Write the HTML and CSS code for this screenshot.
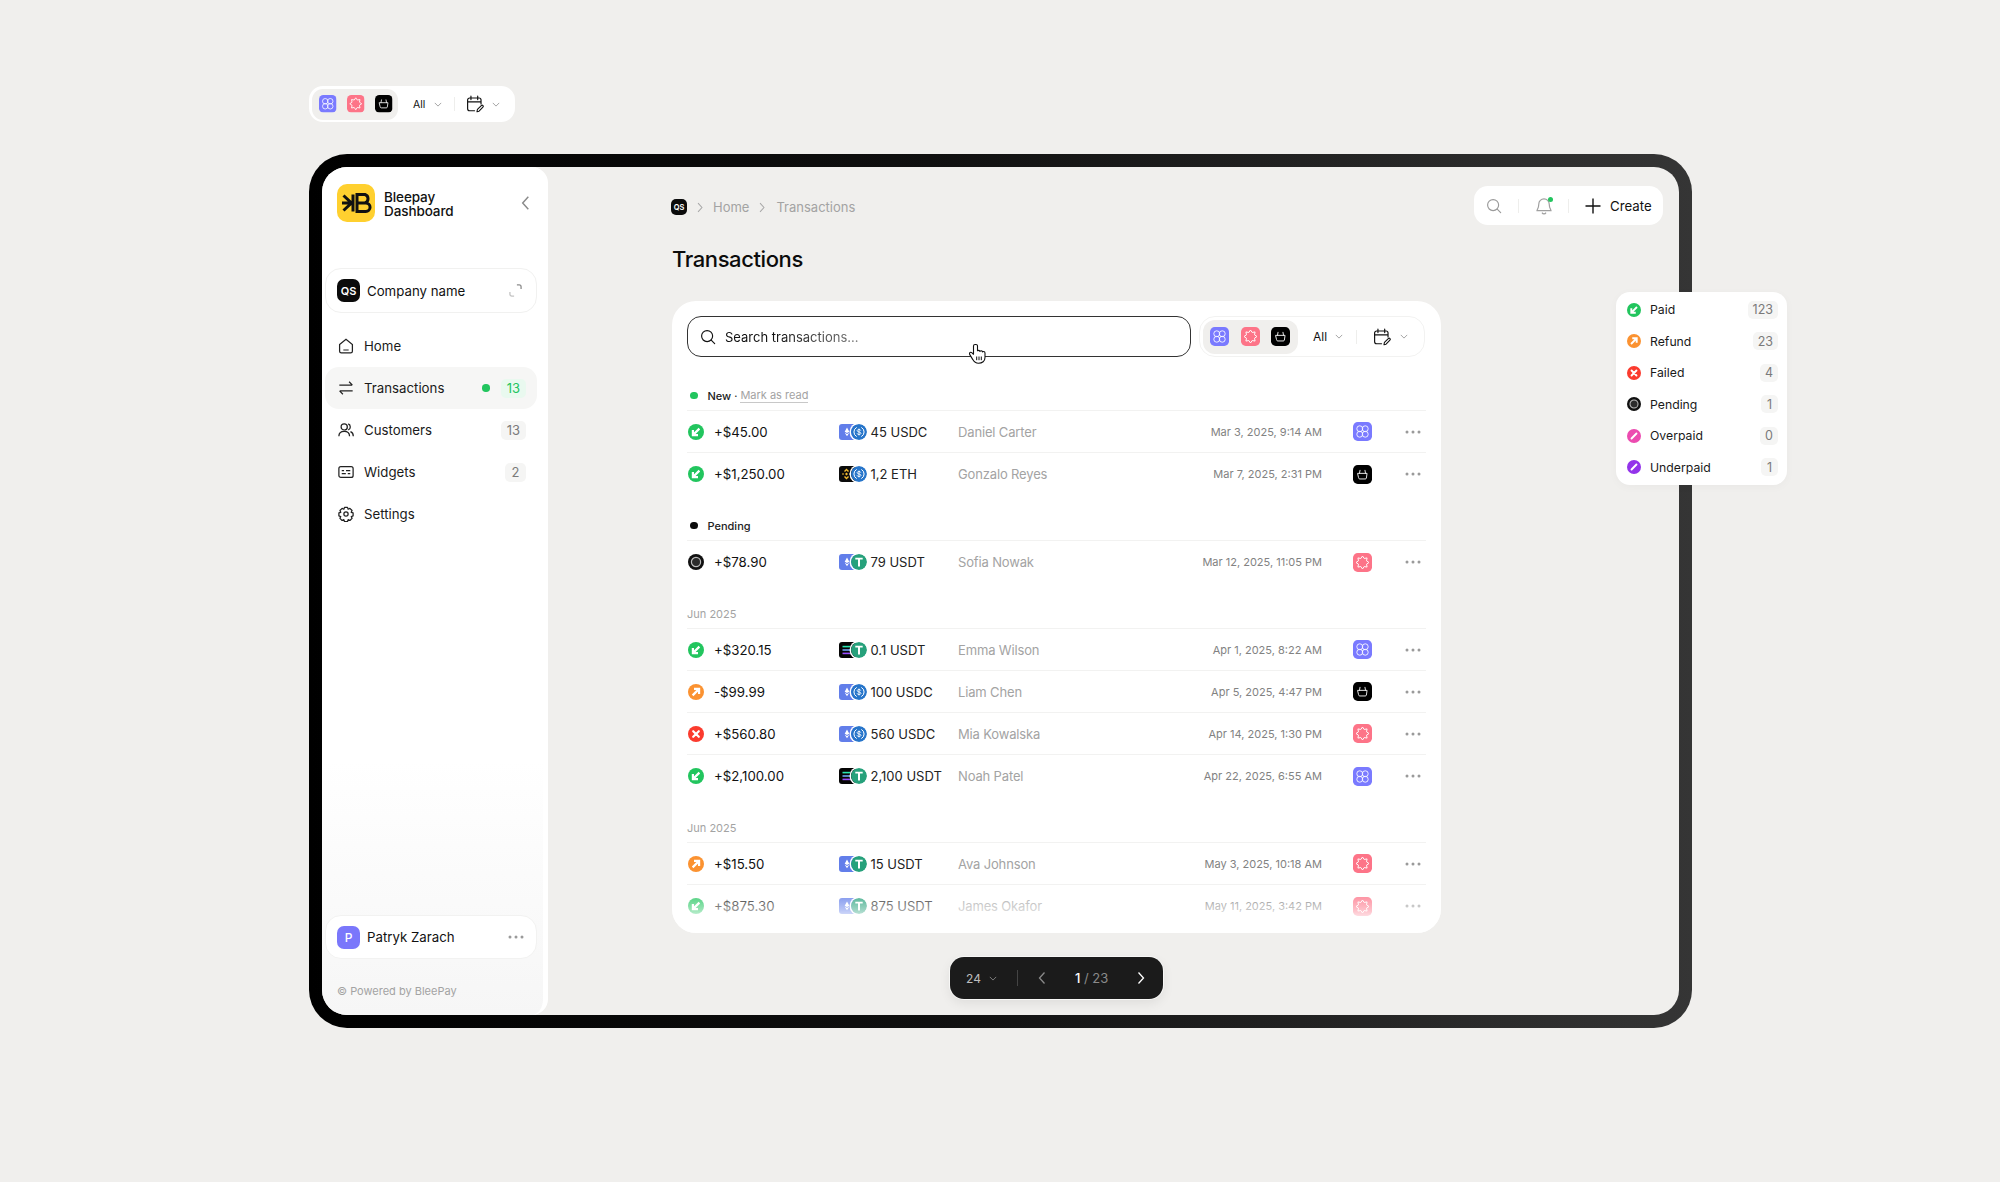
FILE: index.html
```html
<!DOCTYPE html>
<html lang="en">
<head>
  <meta charset="UTF-8" />
  <meta name="viewport" content="width=device-width, initial-scale=1.0"/>
  <title>Transactions - Bleepay Dashboard</title>
  <link rel="stylesheet" href="styles.css">
</head>
<body>
  <svg class="defs" width="0" height="0" aria-hidden="true">
    <symbol id="m-flower" viewBox="0 0 20 20">
      <rect width="20" height="20" rx="5" fill="#7a7aff"/>
      <g fill="none" stroke="#fff" stroke-width=".9">
        <circle cx="7.1" cy="7.1" r="3.1"/><circle cx="12.9" cy="7.1" r="3.1"/>
        <circle cx="7.1" cy="12.9" r="3.1"/><circle cx="12.9" cy="12.9" r="3.1"/>
      </g>
    </symbol>
    <symbol id="m-burst" viewBox="0 0 20 20">
      <rect width="20" height="20" rx="5" fill="#fd7488"/>
      <path d="M16.8 10 14.25 11.76 14.81 14.81 11.76 14.25 10 16.8 8.24 14.25 5.19 14.81 5.75 11.76 3.2 10 5.75 8.24 5.19 5.19 8.24 5.75 10 3.2 11.76 5.75 14.81 5.19 14.25 8.24z" fill="none" stroke="#fff" stroke-width="1" stroke-linejoin="round"/>
    </symbol>
    <symbol id="m-basket" viewBox="0 0 20 20">
      <rect width="20" height="20" rx="5" fill="#000"/>
      <path d="M5.2 8.8h9.6l-.7 4.9a1.2 1.2 0 0 1-1.2 1H7.1a1.2 1.2 0 0 1-1.2-1zM6.8 8.8l.6-3.2M13.2 8.8l-.6-3.2" fill="none" stroke="#eee" stroke-width="1" stroke-linecap="round" stroke-linejoin="round"/>
    </symbol>

    <symbol id="s-paid" viewBox="0 0 16 16">
      <circle cx="8" cy="8" r="8" fill="#22c55e"/>
      <path d="M11.4 4.6 5.6 10.4M4.9 6v5.1H10" fill="none" stroke="#fff" stroke-width="2.2"/>
    </symbol>
    <symbol id="s-refund" viewBox="0 0 16 16">
      <circle cx="8" cy="8" r="8" fill="#fb9231"/>
      <path d="M4.6 11.4l5.8-5.8M6 4.9h5.1V10" fill="none" stroke="#fff" stroke-width="2.2"/>
    </symbol>
    <symbol id="s-failed" viewBox="0 0 16 16">
      <circle cx="8" cy="8" r="8" fill="#fb3b2e"/>
      <path d="M5.2 5.2l5.6 5.6M10.8 5.2l-5.6 5.6" fill="none" stroke="#fff" stroke-width="2.2" stroke-linecap="round"/>
    </symbol>
    <symbol id="s-pending" viewBox="0 0 16 16">
      <circle cx="8" cy="8" r="8" fill="#111"/>
      <circle cx="8" cy="8" r="4.6" fill="#2b2b2b" stroke="#bbb" stroke-width="1.2"/>
    </symbol>
    <symbol id="s-over" viewBox="0 0 16 16">
      <circle cx="8" cy="8" r="8" fill="#ec4bb0"/>
      <path d="M5.2 10.8l5.6-5.6" fill="none" stroke="#fff" stroke-width="2.2" stroke-linecap="round"/>
    </symbol>
    <symbol id="s-under" viewBox="0 0 16 16">
      <circle cx="8" cy="8" r="8" fill="#9333ea"/>
      <path d="M5.2 10.8l5.6-5.6" fill="none" stroke="#fff" stroke-width="2.2" stroke-linecap="round"/>
    </symbol>

    <symbol id="t-eth" viewBox="0 0 17 16">
      <rect width="17" height="16" rx="3" fill="#627eea"/>
      <path d="M8 3.5 5.7 7.8 8 9.1l2.3-1.3zM5.7 8.7 8 12.2l2.3-3.5L8 10z" fill="#fff"/>
    </symbol>
    <symbol id="t-bnb" viewBox="0 0 17 16">
      <rect width="17" height="16" rx="3" fill="#0b0b0b"/>
      <path d="M7.5 2.6 10 5 9 6 7.5 4.6 6 6 5 5zM3 8l1-1 1 1-1 1zM12 8l-1-1-1 1 1 1zM7.5 6.6 9 8 7.5 9.4 6 8zM5 11l1-1 1.5 1.4L9 10l1 1-2.5 2.4z" fill="#f3ba2f"/>
    </symbol>
    <symbol id="t-sol" viewBox="0 0 17 16">
      <rect width="17" height="16" rx="3" fill="#050505"/>
      <path d="M3.5 4.6h8" stroke="#29e6b0" stroke-width="1.6"/>
      <path d="M3.5 8h8" stroke="#6fa3f5" stroke-width="1.6"/>
      <path d="M3.5 11.4h8" stroke="#9a4cff" stroke-width="1.6"/>
    </symbol>
    <symbol id="c-usdc" viewBox="0 0 16 16">
      <circle cx="8" cy="8" r="8" fill="#2775ca"/>
      <path d="M5.7 3.4a5.2 5.2 0 0 0 0 9.2M10.3 3.4a5.2 5.2 0 0 1 0 9.2" fill="none" stroke="#fff" stroke-width="1"/>
      <path d="M9.8 6.6C9.6 5.8 9 5.5 8 5.5c-1.1 0-1.8.5-1.8 1.25 0 1.7 3.7.8 3.7 2.5 0 .8-.8 1.25-1.900 1.25-1.100 0-1.800-.4-2-1.200M8 4.600v6.800" fill="none" stroke="#fff" stroke-width=".9"/>
    </symbol>
    <symbol id="c-usdt" viewBox="0 0 16 16">
      <circle cx="8" cy="8" r="8" fill="#26a17b"/>
      <path d="M4.3 3.8h7.4v1.7H9v7H7v-7H4.3z" fill="#fff"/>
    </symbol>

    <symbol id="more" viewBox="0 0 16 4">
      <circle cx="2" cy="2" r="1.5"/><circle cx="8" cy="2" r="1.5"/><circle cx="14" cy="2" r="1.5"/>
    </symbol>
    <symbol id="chev-down" viewBox="0 0 10 6">
      <path d="M1 1l4 4 4-4" fill="none" stroke="currentColor" stroke-width="1.1"/>
    </symbol>
    <symbol id="chev-right" viewBox="0 0 8 14">
      <path d="M1.5 1.5 6.5 7l-5 5.5" fill="none" stroke="currentColor" stroke-width="1.3"/>
    </symbol>
    <symbol id="chev-left" viewBox="0 0 8 14">
      <path d="M6.5 1.5 1.5 7l5 5.5" fill="none" stroke="currentColor" stroke-width="1.3"/>
    </symbol>
    <symbol id="calendar" viewBox="0 0 20 20">
      <path d="M9.5 17.5H4a2.2 2.2 0 0 1-2.2-2.2V5.500A2.2 2.2 0 0 1 4 3.3h10.5a2.2 2.2 0 0 1 2.2 2.2V10M1.8 7.6h14.900M5.5 1.3v3.800M13 1.3v3.800" fill="none" stroke="#111" stroke-width="1.3" stroke-linecap="round"/>
      <path d="M12.2 18.6l.5-2.6 4.3-4.3a1.2 1.2 0 0 1 1.8 1.8l-4.3 4.5z" fill="none" stroke="#111" stroke-width="1.2" stroke-linejoin="round"/>
    </symbol>
    <symbol id="search" viewBox="0 0 18 18">
      <circle cx="8" cy="8" r="6.2" fill="none" stroke="currentColor" stroke-width="1.3"/>
      <path d="M12.6 12.6 16.5 16.5" fill="none" stroke="currentColor" stroke-width="1.3" stroke-linecap="round"/>
    </symbol>
  </svg>

  <div class="floating-filter filter-pill">
    <div class="merchants">
      <svg class="merchant"><use href="#m-flower"/></svg>
      <svg class="merchant"><use href="#m-burst"/></svg>
      <svg class="merchant"><use href="#m-basket"/></svg>
    </div>
    <span class="filter-all">All</span>
    <svg class="chev"><use href="#chev-down"/></svg>
    <span class="vline"></span>
    <svg class="cal"><use href="#calendar"/></svg>
    <svg class="chev"><use href="#chev-down"/></svg>
  </div>

  <div class="frame">
    <div class="screen">
      <aside class="sidebar">
        <div class="brand">
          <div class="logo">
            <svg viewBox="0 0 38 38" width="38" height="38">
              <path d="M5 19h10M16 10.5V27.5M6.5 11.5 14.5 19l-8 7.5" fill="none" stroke="#111" stroke-width="3"/>
              <path d="M20 10.5h8a4.5 4.5 0 0 1 0 8.5h-8zM20 19h8.800a4.250 4.250 0 0 1 0 8.500H20z" fill="none" stroke="#111" stroke-width="3"/>
            </svg>
          </div>
          <div class="brand-name">Bleepay<br>Dashboard</div>
          <svg class="collapse"><use href="#chev-left"/></svg>
        </div>

        <div class="company">
          <span class="qs">QS</span>
          <span class="company-name">Company name</span>
          <svg class="expand" viewBox="0 0 14 14" width="13" height="13">
            <path d="M8.5 1H11a2 2 0 0 1 2 2v2.500" fill="none" stroke="#8c8c8c" stroke-width="1.4"/>
            <path d="M5.5 13H3a2 2 0 0 1-2-2V8.500" fill="none" stroke="#c4c4c4" stroke-width="1.4"/>
          </svg>
        </div>

        <nav class="nav">
          <a class="nav-item">
            <svg class="nav-icon" viewBox="0 0 18 18"><path d="M1.8 7.3 9 1.5l7.2 5.800v7.500a2 2 0 0 1-2 2H3.800a2 2 0 0 1-2-2zM6 13.500h6"/></svg>
            <span class="nav-label">Home</span>
          </a>
          <a class="nav-item active">
            <svg class="nav-icon" viewBox="0 0 18 18"><path d="M1.5 5.7h14.500M12.500 2l3.700 3.700M16.500 12.300H2M5.500 16l-3.700-3.700"/></svg>
            <span class="nav-label">Transactions</span>
            <span class="nav-dot"></span>
            <span class="badge green">13</span>
          </a>
          <a class="nav-item">
            <svg class="nav-icon" viewBox="0 0 18 18"><circle cx="7" cy="5.5" r="3.5"/><path d="M1 16c0-3.400 2.500-5.500 6-5.500s6 2.100 6 5.500M11.500 2.200a3.500 3.500 0 0 1 0 6.600M14 10.900c1.900.7 3.200 2.500 3.200 5"/></svg>
            <span class="nav-label">Customers</span>
            <span class="badge">13</span>
          </a>
          <a class="nav-item">
            <svg class="nav-icon" viewBox="0 0 18 18"><rect x="1" y="3" width="16" height="12" rx="2.2"/><path d="M4.200 7.500h2.600M9 7.500h4.800M4.200 10.800h4.600M11 10.800h2.800"/></svg>
            <span class="nav-label">Widgets</span>
            <span class="badge">2</span>
          </a>
          <a class="nav-item">
            <svg class="nav-icon" viewBox="0 0 18 18"><circle cx="9" cy="9" r="2.4"/><path d="M7.300 1.500h3.400l.7 2.100 2-.9 2.400 2.400-.9 2 2.100.7v3.400l-2.100.7.900 2-2.400 2.400-2-.9-.7 2.100H7.300l-.7-2.100-2 .9-2.400-2.400.9-2-2.100-.7V7.800l2.100-.7-.9-2 2.400-2.400 2 .9z" stroke-linejoin="round"/></svg>
            <span class="nav-label">Settings</span>
          </a>
        </nav>

        <div class="user">
          <span class="avatar">P</span>
          <span class="user-name">Patryk Zarach</span>
          <svg class="more"><use href="#more"/></svg>
        </div>
        <div class="powered">© Powered by BleePay</div>
      </aside>

      <main class="main">
        <header class="topbar">
          <div class="crumbs">
            <span class="qs small">QS</span>
            <svg class="crumb-chev"><use href="#chev-right"/></svg>
            <span>Home</span>
            <svg class="crumb-chev"><use href="#chev-right"/></svg>
            <span>Transactions</span>
          </div>
          <div class="actions">
            <svg class="action-icon"><use href="#search"/></svg>
            <span class="vline"></span>
            <span class="bell">
              <svg viewBox="0 0 18 18" width="18" height="18"><path d="M9 1.800a5.200 5.200 0 0 0-5.200 5.200c0 4-1.800 5.800-1.800 6.600h14c0-.8-1.800-2.600-1.800-6.600A5.200 5.200 0 0 0 9 1.800zM7 15.600c.5.900 1.200 1.300 2 1.300s1.500-.4 2-1.300" fill="none" stroke="#a0a0a0" stroke-width="1.2"/></svg>
              <i class="bell-dot"></i>
            </span>
            <span class="vline"></span>
            <svg class="plus" viewBox="0 0 16 16" width="16" height="16"><path d="M8 .5v15M.5 8h15" stroke="#111" stroke-width="1.4"/></svg>
            <span class="create">Create</span>
          </div>
        </header>

        <h1 class="title">Transactions</h1>

        <section class="card">
          <div class="toolbar">
            <div class="search-box">
              <svg class="search-icon"><use href="#search"/></svg>
              <span class="search-text">Search transactions...</span>
              <svg class="cursor" viewBox="0 0 18 22" width="18" height="22">
                <path d="M6 1.500c-.9 0-1.500.7-1.500 1.600v8.200L3 9.800c-.8-.7-1.800-.6-2.300 0-.4.500-.3 1.200.1 1.800l3 5c1 1.800 2.600 3.700 5.700 3.700 3.700 0 6.500-2.200 6.500-5.900V10c0-.9-.6-1.500-1.400-1.500-.4 0-.8.100-1.100.4-.2-.7-.8-1.100-1.400-1.100-.5 0-.9.200-1.200.5-.3-.6-.8-.9-1.400-.9-.4 0-.7.100-1 .3V3.100c0-.9-.7-1.600-1.500-1.600z" fill="#fff" stroke="#111" stroke-width="1.1" stroke-linejoin="round"/>
                <path d="M7.700 13.500v3.700M10 13.500v3.700M12.300 13.500v3.700" stroke="#111" stroke-width="1"/>
              </svg>
            </div>
            <div class="filter-pill card-filter">
              <div class="merchants">
                <svg class="merchant"><use href="#m-flower"/></svg>
                <svg class="merchant"><use href="#m-burst"/></svg>
                <svg class="merchant"><use href="#m-basket"/></svg>
              </div>
              <span class="filter-all">All</span>
              <svg class="chev"><use href="#chev-down"/></svg>
              <span class="vline"></span>
              <svg class="cal"><use href="#calendar"/></svg>
              <svg class="chev"><use href="#chev-down"/></svg>
            </div>
          </div>

          <div class="group first">
            <div class="group-label"><i class="dot green-dot"></i><b>New</b> <span class="sep">·</span> <u>Mark as read</u></div>
            <div class="row">
              <div class="amount"><svg class="status"><use href="#s-paid"/></svg>+$45.00</div>
              <div class="coin"><svg class="tile"><use href="#t-eth"/></svg><svg class="round"><use href="#c-usdc"/></svg>45 USDC</div>
              <div class="name">Daniel Carter</div>
              <div class="date">Mar 3, 2025, 9:14 AM</div>
              <svg class="merchant"><use href="#m-flower"/></svg>
              <svg class="more"><use href="#more"/></svg>
            </div>
            <div class="row">
              <div class="amount"><svg class="status"><use href="#s-paid"/></svg>+$1,250.00</div>
              <div class="coin"><svg class="tile"><use href="#t-bnb"/></svg><svg class="round"><use href="#c-usdc"/></svg>1,2 ETH</div>
              <div class="name">Gonzalo Reyes</div>
              <div class="date">Mar 7, 2025, 2:31 PM</div>
              <svg class="merchant"><use href="#m-basket"/></svg>
              <svg class="more"><use href="#more"/></svg>
            </div>
          </div>

          <div class="group">
            <div class="group-label"><i class="dot black-dot"></i><b>Pending</b></div>
            <div class="row">
              <div class="amount"><svg class="status"><use href="#s-pending"/></svg>+$78.90</div>
              <div class="coin"><svg class="tile"><use href="#t-eth"/></svg><svg class="round"><use href="#c-usdt"/></svg>79 USDT</div>
              <div class="name">Sofia Nowak</div>
              <div class="date">Mar 12, 2025, 11:05 PM</div>
              <svg class="merchant"><use href="#m-burst"/></svg>
              <svg class="more"><use href="#more"/></svg>
            </div>
          </div>

          <div class="group">
            <div class="group-label month">Jun 2025</div>
            <div class="row">
              <div class="amount"><svg class="status"><use href="#s-paid"/></svg>+$320.15</div>
              <div class="coin"><svg class="tile"><use href="#t-sol"/></svg><svg class="round"><use href="#c-usdt"/></svg>0.1 USDT</div>
              <div class="name">Emma Wilson</div>
              <div class="date">Apr 1, 2025, 8:22 AM</div>
              <svg class="merchant"><use href="#m-flower"/></svg>
              <svg class="more"><use href="#more"/></svg>
            </div>
            <div class="row">
              <div class="amount"><svg class="status"><use href="#s-refund"/></svg>-$99.99</div>
              <div class="coin"><svg class="tile"><use href="#t-eth"/></svg><svg class="round"><use href="#c-usdc"/></svg>100 USDC</div>
              <div class="name">Liam Chen</div>
              <div class="date">Apr 5, 2025, 4:47 PM</div>
              <svg class="merchant"><use href="#m-basket"/></svg>
              <svg class="more"><use href="#more"/></svg>
            </div>
            <div class="row">
              <div class="amount"><svg class="status"><use href="#s-failed"/></svg>+$560.80</div>
              <div class="coin"><svg class="tile"><use href="#t-eth"/></svg><svg class="round"><use href="#c-usdc"/></svg>560 USDC</div>
              <div class="name">Mia Kowalska</div>
              <div class="date">Apr 14, 2025, 1:30 PM</div>
              <svg class="merchant"><use href="#m-burst"/></svg>
              <svg class="more"><use href="#more"/></svg>
            </div>
            <div class="row">
              <div class="amount"><svg class="status"><use href="#s-paid"/></svg>+$2,100.00</div>
              <div class="coin"><svg class="tile"><use href="#t-sol"/></svg><svg class="round"><use href="#c-usdt"/></svg>2,100 USDT</div>
              <div class="name">Noah Patel</div>
              <div class="date">Apr 22, 2025, 6:55 AM</div>
              <svg class="merchant"><use href="#m-flower"/></svg>
              <svg class="more"><use href="#more"/></svg>
            </div>
          </div>

          <div class="group">
            <div class="group-label month">Jun 2025</div>
            <div class="row">
              <div class="amount"><svg class="status"><use href="#s-refund"/></svg>+$15.50</div>
              <div class="coin"><svg class="tile"><use href="#t-eth"/></svg><svg class="round"><use href="#c-usdt"/></svg>15 USDT</div>
              <div class="name">Ava Johnson</div>
              <div class="date">May 3, 2025, 10:18 AM</div>
              <svg class="merchant"><use href="#m-burst"/></svg>
              <svg class="more"><use href="#more"/></svg>
            </div>
            <div class="row">
              <div class="amount"><svg class="status"><use href="#s-paid"/></svg>+$875.30</div>
              <div class="coin"><svg class="tile"><use href="#t-eth"/></svg><svg class="round"><use href="#c-usdt"/></svg>875 USDT</div>
              <div class="name">James Okafor</div>
              <div class="date">May 11, 2025, 3:42 PM</div>
              <svg class="merchant"><use href="#m-burst"/></svg>
              <svg class="more"><use href="#more"/></svg>
            </div>
          </div>
          <div class="fade"></div>
        </section>

        <div class="pager">
          <span class="per-page">24</span>
          <svg class="chev"><use href="#chev-down"/></svg>
          <span class="pager-line"></span>
          <svg class="pager-prev"><use href="#chev-left"/></svg>
          <span class="pages"><b>1</b> / 23</span>
          <svg class="pager-next"><use href="#chev-right"/></svg>
        </div>
      </main>
    </div>
  </div>

  <div class="status-pop">
    <div class="pop-row"><svg class="pop-icon"><use href="#s-paid"/></svg><span class="pop-label">Paid</span><span class="badge">123</span></div>
    <div class="pop-row"><svg class="pop-icon"><use href="#s-refund"/></svg><span class="pop-label">Refund</span><span class="badge">23</span></div>
    <div class="pop-row"><svg class="pop-icon"><use href="#s-failed"/></svg><span class="pop-label">Failed</span><span class="badge">4</span></div>
    <div class="pop-row"><svg class="pop-icon"><use href="#s-pending"/></svg><span class="pop-label">Pending</span><span class="badge">1</span></div>
    <div class="pop-row"><svg class="pop-icon"><use href="#s-over"/></svg><span class="pop-label">Overpaid</span><span class="badge">0</span></div>
    <div class="pop-row"><svg class="pop-icon"><use href="#s-under"/></svg><span class="pop-label">Underpaid</span><span class="badge">1</span></div>
  </div>
</body>
</html>
```

FILE: styles.css
```css
* { box-sizing: border-box; }
body { margin: 0; height: 1182px; overflow: hidden; position: relative; background: #f0efed; font-family: Inter, "Noto Sans", sans-serif; color: #111; -webkit-font-smoothing: antialiased; }
.defs { position: absolute; }
svg { display: block; flex: none; }

/* filter pill, used above the frame and in the card */
.filter-pill { display: flex; align-items: center; background: #fff; }
.floating-filter { width: 206px; height: 36px; margin: 86px 0 0 309px; padding: 3px; border-radius: 14px; }
.merchants { display: flex; align-items: center; background: #f0efed; }
.floating-filter .merchants { width: 86px; height: 31px; padding: 0 7px; gap: 10.5px; border-radius: 11px; }
.floating-filter .merchant { width: 17.5px; height: 17.5px; }
.floating-filter .filter-all { margin-left: 15px; font-size: 10.5px; font-weight: 400; }
.floating-filter .chev { margin-left: 9px; }
.floating-filter .vline { margin: 0 11px 0 12px; }
.floating-filter .cal { width: 18px; height: 18px; }
.floating-filter .cal + .chev { margin-left: 8px; }
.filter-all { font-weight: 500; color: #111; }
.chev { width: 8px; height: 5px; color: #9a9a9a; }
.vline { width: 1px; height: 14px; background: #eeeeec; }
.merchant { width: 19px; height: 19px; }

/* device frame */
.frame { width: 1383px; height: 874px; margin: 32px 0 0 309px; padding: 13px; border-radius: 38px; background: linear-gradient(90deg, #000 0%, #101010 45%, #353535 100%); }
.screen { display: flex; height: 100%; border-radius: 25px; overflow: hidden; background: #f0efed; }

/* sidebar */
.sidebar { width: 226px; flex: none; display: flex; flex-direction: column; padding: 0 6px 0 3px; background: linear-gradient(180deg, #fff 70%, #f6f6f6 100%); border-right: 5px solid #fff; border-radius: 0 16px 16px 0; }
.brand { display: flex; align-items: center; height: 38px; margin: 17px 0 0 12px; }
.logo { width: 38px; height: 38px; border-radius: 10px; background: #ffd02f; }
.brand-name { margin-left: 9px; padding-top: 2px; font-size: 13.5px; line-height: 14px; font-weight: 500; letter-spacing: -.1px; }
.collapse { width: 9px; height: 16px; margin-left: auto; margin-right: 7px; color: #8a8a8a; }
.company { display: flex; align-items: center; height: 45px; margin-top: 46px; padding: 0 11px; border: 1px solid #f1f1f0; border-radius: 16px; }
.qs { display: flex; align-items: center; justify-content: center; width: 23px; height: 23px; border-radius: 7px; background: #0b0b0b; color: #fff; font-size: 11px; font-weight: 600; }
.qs.small { width: 16px; height: 16px; margin-left: -1px; border-radius: 5px; font-size: 7.5px; }
.company-name { margin-left: 7px; font-size: 13.25px; font-weight: 400; }
.expand { margin-left: auto; margin-right: 3px; }
.nav { display: flex; flex-direction: column; margin-top: 12px; }
.nav-item { display: flex; align-items: center; height: 42px; padding: 0 11px 0 13px; border-radius: 14px; font-size: 13.25px; font-weight: 400; color: #1a1a1a; }
.nav-item.active { background: #f6f6f5; }
.nav-icon { width: 16px; height: 16px; margin-right: 10px; fill: none; stroke: #222; stroke-width: 1.4; }
.nav-label { flex: 1; }
.nav-dot { width: 7.5px; height: 7.5px; margin-right: 11px; border-radius: 50%; background: #22c55e; }
.badge { display: flex; align-items: center; justify-content: center; min-width: 21px; height: 19px; padding: 0 6px; border-radius: 5px; background: #f5f5f4; color: #7a7a7a; font-size: 13px; font-weight: 400; }
.badge.green { background: #e9f9ef; color: #22c55e; }
.user { display: flex; align-items: center; height: 44px; margin-top: auto; padding: 0 12px 0 11px; border: 1px solid #f2f2f1; border-radius: 16px; background: #fff; }
.avatar { display: flex; align-items: center; justify-content: center; width: 23px; height: 23px; border-radius: 7px; background: #7a77fb; color: #fff; font-size: 12px; font-weight: 500; }
.user-name { flex: 1; margin-left: 7px; font-size: 13.25px; font-weight: 400; }
.more { width: 16px; height: 4px; fill: #9a9a9a; }
.powered { margin: 25px 0 17px 12px; font-size: 11px; line-height: 14px; color: #a3a3a3; }

/* main column */
.main { flex: 1; padding: 19px 16px 0 124px; }
.topbar { display: flex; justify-content: space-between; align-items: center; height: 39px; }
.crumbs { display: flex; align-items: center; margin-top: 3px; font-size: 13px; color: #a3a3a3; }
.crumb-chev { width: 8px; height: 11px; margin: 0 9px; color: #a8a8a8; }
.crumbs span:last-child { margin-left: 1px; }
.actions { display: flex; align-items: center; width: 189px; height: 39px; padding: 0 10px 0 12px; border-radius: 14px; background: #fff; }
.action-icon { width: 16px; height: 16px; color: #9a9a9a; }
.actions .vline { margin: 0 16px; }
.bell { position: relative; margin-right: -1px; }
.bell-dot { position: absolute; top: 0; right: 0; width: 5.5px; height: 5.5px; border-radius: 50%; background: #22c55e; }
.create { margin-left: 9px; font-size: 13.25px; font-weight: 400; }
.title { margin: 19px 0 0 0; font-size: 22px; line-height: 30px; font-weight: 500; letter-spacing: -.4px; color: #0c0c0c; }

/* transactions card */
.card { position: relative; width: 769px; height: 632px; margin-top: 27px; padding: 15px; border-radius: 24px; background: #fff; overflow: hidden; }
.toolbar { display: flex; gap: 8px; height: 41px; }
.search-box { position: relative; display: flex; align-items: center; width: 504px; padding-left: 12px; border: 1.5px solid #333; border-radius: 14px; }
.search-icon { width: 16px; height: 16px; color: #111; }
.search-text { margin-left: 9px; font-size: 13px; background: linear-gradient(90deg, #111 35%, #777 100%); -webkit-background-clip: text; background-clip: text; color: transparent; }
.cursor { position: absolute; left: 281px; top: 26px; }
.card-filter { width: 226px; padding: 3px; border: 1px solid #f2f2f1; border-radius: 16px; }
.card-filter .merchants { width: 95px; height: 34px; padding: 0 7px; gap: 11.5px; border-radius: 12px; }
.card-filter .filter-all { margin-left: 15px; font-size: 12px; font-weight: 400; }
.card-filter .chev { margin-left: 8px; }
.card-filter .vline { margin: 0 16px 0 13px; }
.card-filter .cal { width: 18px; height: 18px; }
.card-filter .cal + .chev { margin-left: 9px; }

.group { margin-top: 17px; }
.group.first { margin-top: 25px; }
.group-label { display: flex; align-items: center; height: 29px; padding-bottom: 1px; border-bottom: 1px solid #f2f2f1; font-size: 11px; color: #222; }
.group-label b { font-weight: 500; }
.group-label.month { color: #a3a3a3; }
.group-label .sep { margin: 0 3px; }
.group-label u { color: #a3a3a3; text-decoration: none; border-bottom: 1px solid #c8c8c8; line-height: 13px; }
.dot { width: 7.5px; height: 7.5px; margin: 0 10px 0 3px; border-radius: 50%; }
.green-dot { background: #22c55e; }
.black-dot { background: #0c0c0c; }
.row { display: grid; grid-template-columns: 152px 119px 213px 151px 50px 53px; align-items: center; height: 42px; border-bottom: 1px solid #f2f2f1; }
.group .row:last-child { border-bottom: none; }
.amount { display: flex; align-items: center; font-size: 13.25px; font-weight: 400; color: #111; }
.status { width: 16px; height: 16px; margin: 0 10px 0 1px; }
.coin { display: flex; align-items: center; font-size: 13px; color: #222; }
.tile { width: 17px; height: 16px; }
.round { width: 16px; height: 16px; margin: 0 3.5px 0 -5px; border-radius: 50%; box-shadow: 0 0 0 1.5px #fff; }
.name { font-size: 13px; letter-spacing: -.15px; color: #a3a3a3; }
.date { text-align: right; font-size: 11px; color: #828282; }
.row .merchant { justify-self: end; }
.row .more { justify-self: end; margin-right: 4px; }
.fade { position: absolute; left: 0; right: 0; bottom: 0; height: 46px; background: linear-gradient(180deg, rgba(255,255,255,0) 0%, rgba(255,255,255,.55) 50%, #fff 80%); }

/* pagination */
.pager { display: flex; align-items: center; width: 213px; height: 42px; margin: 24px 0 0 278px; padding: 0 16px; border-radius: 14px; background: #1b1b1b; box-shadow: 0 0 0 1px #f7f7f6, 0 4px 12px rgba(0,0,0,.08); color: #fff; }
.per-page { font-size: 12px; color: #bdbdbd; }
.pager .chev { margin-left: 8px; color: #8a8a8a; }
.pager-line { width: 1px; height: 16px; margin-left: 20px; background: #444; }
.pager-prev { width: 8px; height: 14px; margin-left: 20px; color: #8a8a8a; }
.pages { margin-left: 29px; font-size: 13px; color: #8a8a8a; }
.pages b { font-weight: 500; color: #fff; }
.pager-next { width: 8px; height: 14px; margin-left: 29px; color: #fff; }

/* status popover */
.status-pop { position: absolute; left: 1616px; top: 292px; width: 171px; height: 193px; padding: 2px 9px 2px 11px; border-radius: 14px; background: #fff; box-shadow: 0 2px 10px rgba(0,0,0,.03); }
.pop-row { display: flex; align-items: center; height: 31.5px; }
.pop-icon { width: 14px; height: 14px; margin-right: 9px; }
.pop-label { flex: 1; font-size: 12.25px; font-weight: 400; color: #1a1a1a; }
.pop-row .badge { min-width: 17px; height: 18px; padding: 0 5px; font-size: 12.5px; }
```
